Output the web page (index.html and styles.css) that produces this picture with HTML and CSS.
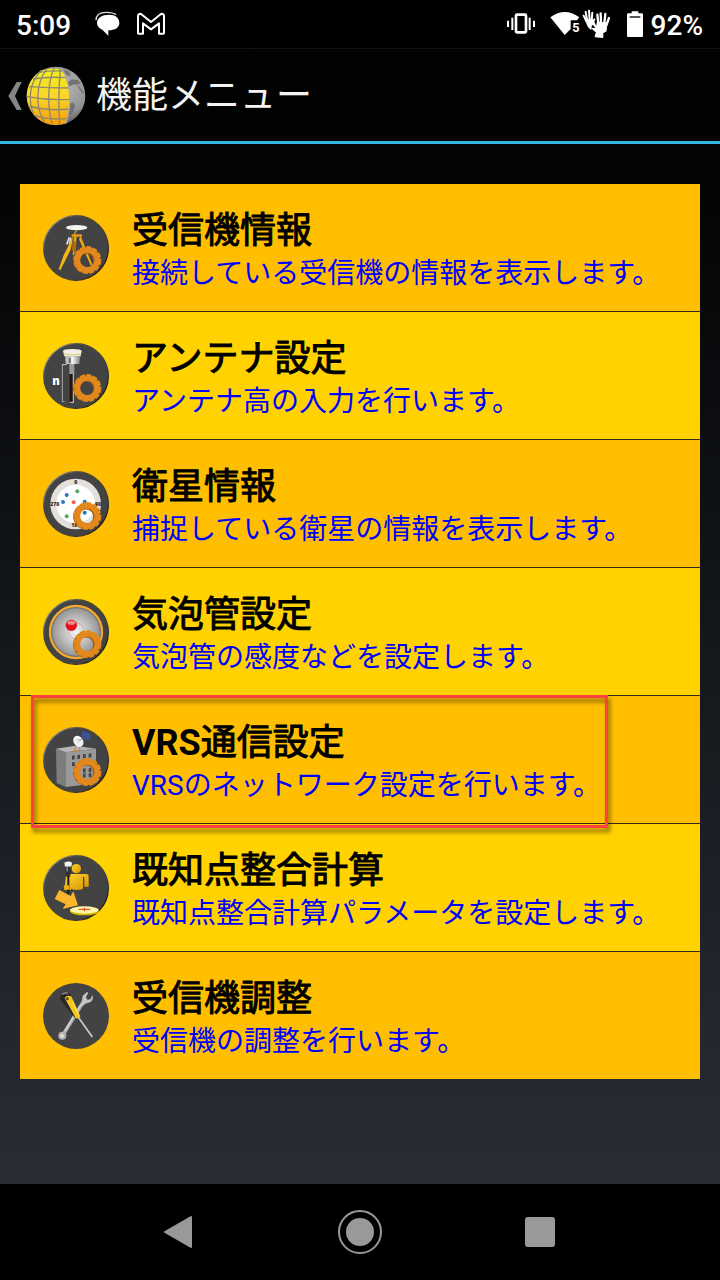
FILE: index.html
```html
<!DOCTYPE html>
<html lang="ja">
<head>
    <meta charset="UTF-8">
    <meta name="viewport" content="width=device-width, initial-scale=1.0">
    <title>機能メニュー</title>
    <link rel="stylesheet" href="styles.css">
</head>
<body>
    <!-- Shared icon parts -->
    <svg class="defs" width="0" height="0" aria-hidden="true">
        <defs>
            <linearGradient id="rim" x1="0" y1="0" x2="1" y2="1">
                <stop offset="0.1" stop-color="#999"/>
                <stop offset="0.3" stop-color="#444"/>
                <stop offset="0.7" stop-color="#3a3a3a"/>
                <stop offset="0.9" stop-color="#111"/>
            </linearGradient>
            <linearGradient id="gold" x1="0" y1="0" x2="0" y2="1">
                <stop offset="0" stop-color="#f1ec22"/>
                <stop offset="0.5" stop-color="#fcd52a"/>
                <stop offset="1" stop-color="#f79c0c"/>
            </linearGradient>
            <radialGradient id="stone" cx="0.6" cy="0.35" r="0.65">
                <stop offset="0" stop-color="#b8b8b8"/>
                <stop offset="0.7" stop-color="#929292"/>
                <stop offset="1" stop-color="#555"/>
            </radialGradient>
            <radialGradient id="dish">
                <stop offset="0" stop-color="#f4f4f4"/>
                <stop offset="1" stop-color="#8c8c8c"/>
            </radialGradient>
            <linearGradient id="person" x1="0" y1="0" x2="1" y2="1">
                <stop offset="0" stop-color="#ffd52e"/>
                <stop offset="1" stop-color="#d79300"/>
            </linearGradient>
            <linearGradient id="steel" x1="0" y1="0" x2="1" y2="0">
                <stop offset="0" stop-color="#aaa"/>
                <stop offset="0.5" stop-color="#f5f5f5"/>
                <stop offset="1" stop-color="#777"/>
            </linearGradient>
            <g id="disc">
                <circle cx="138" cy="143" r="97" fill="#434343" stroke="url(#rim)" stroke-width="4"/>
            </g>
            <g id="gear" fill="none">
                <circle cx="168" cy="181" r="30" stroke="#9c5a12" stroke-width="17"/>
                <circle cx="172" cy="179" r="30" stroke="#e2881c" stroke-width="17"/>
                <circle cx="172" cy="179" r="39" stroke="#e2881c" stroke-width="6" stroke-dasharray="15 5"/>
            </g>
        </defs>
    </svg>

    <div class="status-bar">
        <span class="clock">5:09</span>
        <svg class="chat" width="26" height="26" viewBox="284 36 78 78" aria-hidden="true">
            <path d="M287 64c0-16 12-24 30-24 14 0 24 1 30 7" fill="none" stroke="#ddd" stroke-width="4"/>
            <path d="M326 47c20 0 31 10 31 25 0 14-13 22-33 22v16l-18-18c-10-4-16-11-16-20 0-15 15-25 36-25z" fill="#fff"/>
        </svg>
        <svg class="mail" width="28" height="24" viewBox="411 36 84 72" aria-hidden="true">
            <path d="M414 99V48c0-7 7-8 12-4l27 22 27-22c5-4 12-3 12 4v51c0 1-1 2-2 2h-13V70l-24 18-24-18v31h-13c-1 0-2-1-2-2z" fill="none" stroke="#fff" stroke-width="6" stroke-linejoin="round"/>
        </svg>
        <div class="status-right">
            <svg width="28" height="26" viewBox="48 34 84 78" aria-hidden="true">
                <path d="M51 63v19M64 54v37M116 54v37M129 63v19" stroke="#fff" stroke-width="6"/>
                <rect x="75" y="45" width="30" height="53" rx="3" fill="none" stroke="#fff" stroke-width="8"/>
            </svg>
            <svg class="wifi" width="30" height="30" viewBox="178 28 90 90" aria-hidden="true">
                <path d="M179 53q43-32 87 0l-7 9h-19v26l-18 18z" fill="#fff"/>
                <text x="245" y="98" font-size="38" class="badge-num" fill="#fff">5</text>
            </svg>
            <svg class="hands" width="30" height="32" viewBox="278 24 90 96" aria-hidden="true">
                <g fill="none" stroke="#fff" stroke-linecap="round" stroke-linejoin="round">
                    <path d="M291 64l-8-17M294 62l-5-26M301 60l-2-28M307 62l2-24M310 68l5-10" stroke-width="6"/>
                    <path d="M291 60l18-1 4 12-8 5v11q-12-8-14-27z" fill="#fff" stroke-width="4"/>
                    <path d="M327 72l-3-28M335 70l-1-30M345 70l3-28M351 76l8-22M326 88l-11-14-4-10" stroke-width="7"/>
                    <path d="M325 68l26 2-2 22-10 6v13l-20-2 4-13-12-10 12 2z" fill="#fff" stroke-width="6"/>
                </g>
            </svg>
            <svg class="battery" width="16" height="26" viewBox="411 33 48 78" aria-hidden="true">
                <path d="M425 34h20v6h10q4 0 4 4v63q0 4-4 4h-40q-4 0-4-4V44q0-4 4-4h10z" fill="#fff"/>
                <path d="M419 51h32" stroke="#333" stroke-width="5"/>
            </svg>
            <span class="percent">92%</span>
        </div>
    </div>

    <header class="action-bar">
        <button class="back" type="button" aria-label="戻る">
            <svg width="14" height="28" viewBox="26 246 42 84" aria-hidden="true">
                <path d="M52 246h15l-20 42 20 42H52L27 288z" fill="#858585"/>
            </svg>
            <svg width="60" height="60" viewBox="78 198 180 180" aria-hidden="true">
                <circle cx="168" cy="288" r="88" fill="url(#stone)"/>
                <path d="M187 208l20 6 6 16-14-6zM203 247l12-9 18 2 9 10-10 4-12-1-14 8zM234 255l18 22-2 5-14-17zM208 312l10-5 8 9-7 20-12 16-8 14-3-8z" fill="#737373"/>
                <path d="M187 209C212 253 216 310 198 370A88 88 0 0 1 104 347A88 88 0 0 1 81 276A88 88 0 0 1 130 210Q158 201 187 209z" fill="url(#gold)"/>
                <g fill="none" stroke="#8d8a6c" stroke-width="4">
                    <path d="M118 217Q150 211 190 213M99 237Q145 229 198 233M86 260Q145 264 207 264M81 290Q145 302 211 298M85 318Q145 334 209 327M103 346Q150 362 204 355"/>
                    <path d="M163 202C142 250 141 320 157 374M181 206C177 255 175 320 179 374M141 206C107 250 105 322 133 366M125 210C88 246 82 300 102 344"/>
                    <path d="M187 209C212 253 216 310 198 370" stroke="#aaa"/>
                </g>
            </svg>
        </button>
        <h1>機能メニュー</h1>
    </header>

    <main>
        <ul class="menu">
            <li>
                <a href="#receiver">
                    <svg class="icon" viewBox="39 44 198 198" aria-hidden="true">
                        <use href="#disc"/>
                        <path d="M118 111l-8 21M123 112l-5 20" stroke="#ddd" stroke-width="5"/>
                        <path d="M139 90l-7 14" stroke="#c99b20" stroke-width="4"/>
                        <path d="M125 102h31v7h-31z" fill="#f39a17"/>
                        <path d="M130 106l-8 42-31 62-5-3 15-42z" fill="#f2b616"/>
                        <path d="M140 108l-4 40-4 17-4-2 4-55zM152 107l37 90-7-2-35-78z" fill="#e8a914"/>
                        <path d="M127 124h13l-3 35-11-8z" fill="#a96c15"/>
                        <ellipse cx="140" cy="82" rx="32" ry="8" fill="#f2f2f2"/>
                        <use href="#gear"/>
                    </svg>
                    <span class="text">
                        <span class="title">受信機情報</span>
                        <span class="desc">接続している受信機の情報を表示します。</span>
                    </span>
                </a>
            </li>
            <li>
                <a href="#antenna">
                    <svg class="icon" viewBox="39 44 198 198" aria-hidden="true">
                        <use href="#disc"/>
                        <path d="M104 109h-7v111h7M97 109h14" fill="none" stroke="#ddd" stroke-width="2"/>
                        <path d="M118 106h15v32h-15z" fill="#999"/>
                        <path d="M119 137h9v84h-9z" fill="#24120c"/>
                        <path d="M130 137v85M119 222h13" stroke="#ccc" stroke-width="3"/>
                        <path d="M105 84h46l-3 23h-41z" fill="url(#steel)"/>
                        <path d="M116 88h6v17h-6z" fill="#666"/>
                        <path d="M99 68q0-6 28-6t28 6l-3 16h-49z" fill="#efefe8"/>
                        <path d="M101 77q26 6 52 0" fill="none" stroke="#d7cf63" stroke-width="3"/>
                        <text x="67" y="170" font-size="34" class="icon-letter" fill="#fff">n</text>
                        <use href="#gear"/>
                    </svg>
                    <span class="text">
                        <span class="title">アンテナ設定</span>
                        <span class="desc">アンテナ高の入力を行います。</span>
                    </span>
                </a>
            </li>
            <li>
                <a href="#satellite">
                    <svg class="icon" viewBox="39 44 198 198" aria-hidden="true">
                        <use href="#disc"/>
                        <circle cx="137" cy="143" r="76" fill="#e3e0dc"/>
                        <circle cx="137" cy="143" r="58" fill="#fff"/>
                        <g class="icon-letter" font-size="15" fill="#222" text-anchor="middle">
                            <text x="137" y="83">0</text>
                            <text x="74" y="148">270</text>
                            <text x="204" y="148">90</text>
                            <text x="137" y="213">180</text>
                        </g>
                        <g fill="#2878bf">
                            <circle cx="110" cy="116" r="6"/>
                            <circle cx="99" cy="137" r="6"/>
                            <circle cx="164" cy="136" r="6"/>
                        </g>
                        <g fill="#54a860">
                            <circle cx="142" cy="105" r="6"/>
                            <circle cx="110" cy="180" r="6"/>
                        </g>
                        <circle cx="131" cy="138" r="6" fill="#ea654a"/>
                        <use href="#gear"/>
                        <circle cx="164" cy="169" r="6" fill="#2878bf"/>
                    </svg>
                    <span class="text">
                        <span class="title">衛星情報</span>
                        <span class="desc">捕捉している衛星の情報を表示します。</span>
                    </span>
                </a>
            </li>
            <li>
                <a href="#bubble">
                    <svg class="icon" viewBox="39 44 198 198" aria-hidden="true">
                        <use href="#disc"/>
                        <circle cx="138" cy="143" r="78" fill="url(#dish)" stroke="#f3a72f" stroke-width="7"/>
                        <circle cx="138" cy="143" r="73" fill="none" stroke="#555" stroke-width="2"/>
                        <circle cx="138" cy="140" r="24" fill="none" stroke="#d66" stroke-width="1"/>
                        <circle cx="124" cy="123" r="17" fill="#e3131b"/>
                        <ellipse cx="124" cy="115" rx="12" ry="6" fill="#f58c8c"/>
                        <use href="#gear"/>
                    </svg>
                    <span class="text">
                        <span class="title">気泡管設定</span>
                        <span class="desc">気泡管の感度などを設定します。</span>
                    </span>
                </a>
            </li>
            <li class="highlighted">
                <a href="#vrs">
                    <svg class="icon" viewBox="39 44 198 198" aria-hidden="true">
                        <use href="#disc"/>
                        <path d="M78 109l30 11v104l-28-12z" fill="#7d7d7d"/>
                        <path d="M78 109l58-9 62 9-90 11z" fill="#b5b5b5"/>
                        <path d="M108 120l90-11v104l-90 11z" fill="#999"/>
                        <g fill="#444">
                            <path d="M126 130l8-1v12l-8 1zM142 128l8-1v12l-8 1zM159 126l8-1v12l-8 1zM176 124l8-1v12l-8 1z"/>
                            <path d="M126 150l8-1v12l-8 1zM159 169l8-1v12l-8 1zM176 168l8-1v12l-8 1zM159 184l8-1v12l-8 1zM176 183l8-1v12l-8 1z"/>
                        </g>
                        <path d="M137 101l2-10 8-2 4 9-3 17-15 1z" fill="none" stroke="#d48118" stroke-width="3"/>
                        <ellipse cx="145" cy="87" rx="14" ry="18" fill="#f2f2f2" transform="rotate(-35 145 87)"/>
                        <path d="M139 83l20-2M145 91l11-13" stroke="#999" stroke-width="2"/>
                        <path d="M157 74q9 0 9 9M156 67q16 0 17 16M156 61q22-2 23 20" fill="none" stroke="#3b58b1" stroke-width="5"/>
                        <use href="#gear"/>
                    </svg>
                    <span class="text">
                        <span class="title"><b>VRS</b>通信設定</span>
                        <span class="desc">VRSのネットワーク設定を行います。</span>
                    </span>
                </a>
            </li>
            <li>
                <a href="#known-point">
                    <svg class="icon" viewBox="39 44 198 198" aria-hidden="true">
                        <use href="#disc"/>
                        <circle cx="139" cy="85" r="14" fill="url(#person)"/>
                        <path d="M108 101h61q7 0 7 7v31h-13v-29h-4v35q-18 8-36 0v4h-20l5-42z" fill="url(#person)"/>
                        <path d="M103 67q12-7 23 0l-2 12h-19z" fill="#f4f4ef"/>
                        <path d="M105 79h18v16l-3 14h-11l-4-14z" fill="#333"/>
                        <path d="M109 81h5v12h-5z" fill="#888"/>
                        <path d="M115 107v55" stroke="#1b1b1b" stroke-width="6"/>
                        <path d="M101 135h16v13h-14z" fill="#e9ae16"/>
                        <ellipse cx="163" cy="213" rx="43" ry="12" fill="#d8b900"/>
                        <ellipse cx="163" cy="209" rx="43" ry="11" fill="#fff6a8"/>
                        <path d="M146 207h35M163 202v11" stroke="#d8361b" stroke-width="3"/>
                        <path d="M88 149l34 18 8-14 14 42-46 11 9-14-33-16z" fill="#fbb62c"/>
                    </svg>
                    <span class="text">
                        <span class="title">既知点整合計算</span>
                        <span class="desc">既知点整合計算パラメータを設定します。</span>
                    </span>
                </a>
            </li>
            <li>
                <a href="#adjust">
                    <svg class="icon" viewBox="39 44 198 198" aria-hidden="true">
                        <circle cx="138" cy="143" r="99" fill="#434343"/>
                        <path d="M99 200l62-101" stroke="#aaa" stroke-width="11"/>
                        <path d="M104 189l50-82" stroke="#d8d8d8" stroke-width="4"/>
                        <circle cx="97" cy="202" r="12" fill="#b0b0b0"/>
                        <circle cx="96" cy="203" r="6" fill="#ddd"/>
                        <path d="M155 104l3-22 13-11 4 2-7 13 4 8 9-1 6-13q5 13-5 21l-16 5-9 8z" fill="#c4c4c4"/>
                        <path d="M145 147l42 59" stroke="#ccc" stroke-width="5"/>
                        <path d="M92 94q-3-17 10-22 16-3 22 11l21 57-11 8z" fill="#262626"/>
                        <path d="M104 89q6-11 20-5l27 60q-4 9-14 5z" fill="#f4c71c"/>
                        <path d="M96 79q8-8 18-3" fill="none" stroke="#777" stroke-width="6"/>
                        <path d="M127 99l18 40" stroke="#ffe96b" stroke-width="3"/>
                        <circle cx="112" cy="91" r="5" fill="#70560a"/>
                    </svg>
                    <span class="text">
                        <span class="title">受信機調整</span>
                        <span class="desc">受信機の調整を行います。</span>
                    </span>
                </a>
            </li>
        </ul>
    </main>

    <nav class="nav-bar">
        <button type="button" aria-label="戻る">
            <svg width="44" height="44" viewBox="0 0 44 44" aria-hidden="true">
                <path d="M7 22L33 7v30z" fill="#999" stroke="#999" stroke-width="2" stroke-linejoin="round"/>
            </svg>
        </button>
        <button type="button" aria-label="ホーム">
            <svg width="44" height="44" viewBox="0 0 44 44" aria-hidden="true">
                <circle cx="22" cy="22" r="21" fill="none" stroke="#999" stroke-width="2"/>
                <circle cx="22" cy="22" r="14" fill="#999"/>
            </svg>
        </button>
        <button type="button" aria-label="アプリ履歴">
            <svg width="44" height="44" viewBox="0 0 44 44" aria-hidden="true">
                <rect x="7" y="7" width="30" height="30" rx="3" fill="#999"/>
            </svg>
        </button>
    </nav>
</body>
</html>
```

FILE: styles.css
```css
/* Global Styles */
* {
    box-sizing: border-box;
}

body {
    font-family: Roboto, "Noto Sans CJK JP", sans-serif;
    margin: 0;
    min-height: 100vh;
    display: flex;
    flex-direction: column;
    background: linear-gradient(#000 0%, #030405 15%, #282d35 92%);
    color: #fff;
}

button {
    display: flex;
    align-items: center;
    padding: 0;
    border: none;
    background: none;
    cursor: pointer;
}

.defs {
    position: absolute;
}

/* Status Bar */
.status-bar {
    display: flex;
    align-items: center;
    height: 48px;
    padding: 0 17px 0 16px;
    background: #000;
    font-size: 28px;
    font-weight: 500;
    line-height: 48px;
}

.clock,
.percent {
    padding-top: 3px;
}

.chat {
    margin-left: 24px;
}

.mail {
    margin-left: 16px;
}

.status-right {
    display: flex;
    align-items: center;
    margin-left: auto;
}

.wifi {
    margin-left: 15px;
}

.hands {
    margin-left: 2px;
}

.battery {
    margin: 0 8px 0 15px;
}

.badge-num {
    font-weight: 700;
}

/* Action Bar */
.action-bar {
    display: flex;
    align-items: center;
    gap: 10px;
    height: 96px;
    padding: 1px 8px 0;
    border-top: 1px solid #111;
    border-bottom: 3px solid #33b5e5;
}

.back {
    gap: 4px;
}

.action-bar h1 {
    margin: 0;
    font-size: 36px;
    font-weight: 400;
    line-height: 52px;
    color: #f3f3f3;
}

/* Menu */
main {
    flex: 1;
    padding: 40px 20px;
}

.menu {
    margin: 0;
    padding: 0;
    list-style: none;
}

.menu li {
    position: relative;
    background: #ffbf00;
    border-bottom: 1px solid #33291a;
}

.menu li:nth-child(even) {
    background: #ffd200;
}

.menu li:last-child {
    border-bottom: none;
}

.menu a {
    display: flex;
    align-items: center;
    gap: 23px;
    min-height: 127px;
    padding: 0 23px;
    color: #000;
    text-decoration: none;
}

.icon {
    width: 66px;
    height: 66px;
    flex: none;
}

.icon-letter {
    font-family: "Open Sans", sans-serif;
    font-weight: 800;
}

.text {
    padding-top: 8px;
}

.title,
.desc {
    display: block;
}

/* Thickened regular weight, lighter than the real bold */
.title {
    font-size: 36px;
    line-height: 44px;
    -webkit-text-stroke: 1px #000;
}

.title b {
    -webkit-text-stroke: 0;
}

.desc {
    font-size: 28px;
    line-height: 42px;
    color: #00f;
}

/* Frame drawn over the selected row */
.highlighted::after {
    content: "";
    position: absolute;
    z-index: 1;
    top: -1px;
    right: 92px;
    bottom: -5px;
    left: 11px;
    border: 3px solid #ff4040;
    filter: drop-shadow(2px 4px 2px rgba(0, 0, 0, 0.5));
    pointer-events: none;
}

/* Navigation Bar */
.nav-bar {
    display: grid;
    grid-template-columns: repeat(3, 25%);
    justify-content: center;
    height: 96px;
    background: #000;
}

.nav-bar button {
    justify-content: center;
}
```
